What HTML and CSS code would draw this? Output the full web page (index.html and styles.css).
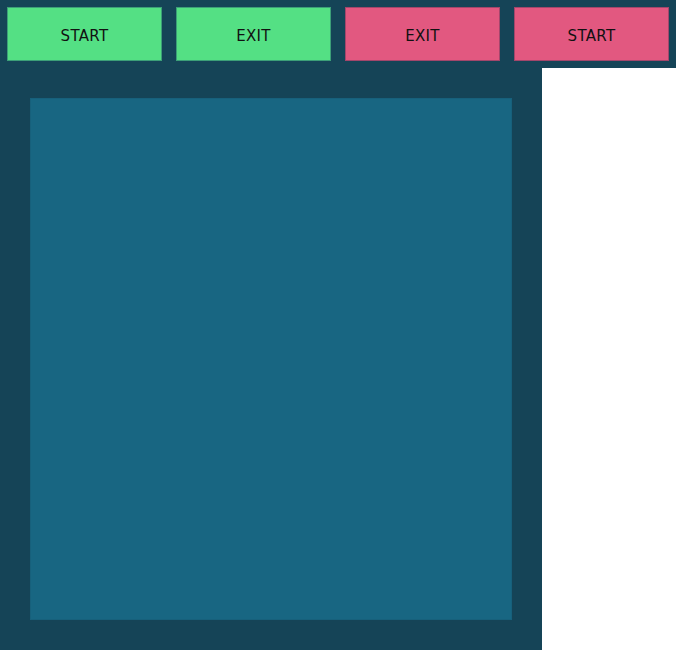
FILE: index.html
```html
<!DOCTYPE html>
<html>
<head>
<meta charset="utf-8">
<link rel="stylesheet" href="styles.css">
</head>
<body>
<div class="toolbar">
  <button class="btn btn-green">START</button>
  <button class="btn btn-green">EXIT</button>
  <button class="btn btn-pink">EXIT</button>
  <button class="btn btn-pink">START</button>
</div>
<div class="panel">
  <div class="canvas"></div>
</div>
</body>
</html>
```
FILE: styles.css
```css
html, body {
  margin: 0;
  padding: 0;
  background: #ffffff;
}
body {
  font-family: "DejaVu Sans", sans-serif;
}
.toolbar {
  display: flex;
  gap: 14px;
  padding: 7px;
  background: #154457;
}
.btn {
  width: 155px;
  height: 54px;
  box-sizing: border-box;
  margin: 0;
  padding: 4px 0 0;
  font-family: "DejaVu Sans", Verdana, sans-serif;
  font-size: 15px;
  letter-spacing: 0.3px;
  color: #111111;
  border: 1px solid;
  cursor: pointer;
}
.btn-green {
  background: #54e084;
  border-color: #3c9f78;
}
.btn-pink {
  background: #e25880;
  border-color: #a3466b;
}
.panel {
  width: 542px;
  height: 582px;
  box-sizing: border-box;
  padding: 30px;
  background: #154457;
}
.canvas {
  width: 100%;
  height: 100%;
  background: #186682;
  border: 1px solid #17607b;
  box-sizing: border-box;
}
```
